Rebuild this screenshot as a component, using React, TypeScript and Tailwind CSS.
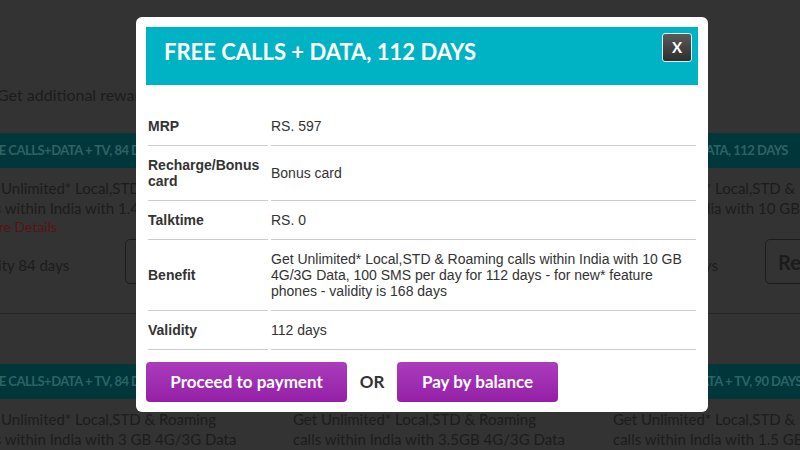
import { Fragment } from "react"

type Plan = {
    title: string,
    line1: string,
    line2: string,
    validity: string,
}

const topPlans: Plan[] = [
    { title: "FREE CALLS+DATA + TV, 84 DAYS", line1: "Get Unlimited* Local,STD & Roaming", line2: "calls within India with 1.4 GB 4G/3G Data", validity: "Validity 84 days" },
    { title: "FREE CALLS+DATA, 84 DAYS", line1: "Get Unlimited* Local,STD & Roaming", line2: "calls within India with 2 GB 4G/3G Data", validity: "Validity 84 days" },
    { title: "FREE CALLS + DATA, 112 DAYS", line1: "Get Unlimited* Local,STD & Roaming", line2: "calls within India with 10 GB 4G/3G Data", validity: "Validity 112 days" },
]

const bottomPlans: Plan[] = [
    { title: "FREE CALLS+DATA + TV, 84 DAYS", line1: "Get Unlimited* Local,STD & Roaming", line2: "calls within India with 3 GB 4G/3G Data", validity: "Validity 84 days" },
    { title: "FREE CALLS+DATA + TV, 84 DAYS", line1: "Get Unlimited* Local,STD & Roaming", line2: "calls within India with 3.5GB 4G/3G Data", validity: "Validity 84 days" },
    { title: "FREE CALLS+DATA + TV, 90 DAYS", line1: "Get Unlimited* Local,STD & Roaming", line2: "calls within India with 1.5 GB 4G/3G Data", validity: "Validity 90 days" },
]

const details = [
    { label: "MRP", value: "RS. 597" },
    { label: "Recharge/Bonus card", value: "Bonus card" },
    { label: "Talktime", value: "RS. 0" },
    { label: "Benefit", value: "Get Unlimited* Local,STD & Roaming calls within India with 10 GB 4G/3G Data, 100 SMS per day for 112 days - for new* feature phones - validity is 168 days" },
    { label: "Validity", value: "112 days" },
]

const PlanCard = ({ plan }: { plan: Plan }) => {
    return (
        <div className="w-[320px] shrink-0 pr-[20px]">
            <div className="h-[35px] bg-[#00373b] flex items-center pl-[4px] text-[13px] font-bold text-[#2e6366] whitespace-nowrap tracking-[-0.5px]">
                {plan.title}
            </div>
            <div className="mt-[10px] w-[255px] text-[15px] leading-[20px] text-[#1c1c1c] whitespace-nowrap">
                <p>{plan.line1}</p>
                <p>{plan.line2}</p>
            </div>
            <p className="text-[14px] leading-[18px] text-[#571212] pl-[5px]">More Details</p>
            <div className="mt-[3px] flex items-center">
                <span className="-ml-[7px] w-[159px] pt-[8px] text-[15px] text-[#1c1c1c]">{plan.validity}</span>
                <div className="w-[120px] h-[45px] border border-[#1c1c1c] rounded-[5px] flex items-center px-[12px] text-[20px] font-bold text-[#1c1c1c]">
                    Recharge
                </div>
            </div>
        </div>
    )
}

const App = () => {
    return (
        <div className="relative w-[800px] h-[450px] overflow-hidden bg-[#333333] font-['Lato',sans-serif]">
            {/* page behind the dimmed overlay */}
            <div className="pt-[83px]">
                <p className="-ml-[3px] text-[16px] leading-[24px] text-[#1c1c1c] whitespace-nowrap">
                    Get additional rewards when you recharge online
                </p>
                <div className="mt-[26px] -ml-[27px] flex border-b border-[#262626] pb-[29px]">
                    {topPlans.map((plan, i) => (
                        <PlanCard key={i} plan={plan} />
                    ))}
                </div>
                <div className="mt-[50px] -ml-[27px] flex">
                    {bottomPlans.map((plan, i) => (
                        <PlanCard key={i} plan={plan} />
                    ))}
                </div>
            </div>

            {/* modal */}
            <div className="absolute left-[136px] top-[17px] w-[572px] bg-white rounded-[6px] p-[10px]">
                <div className="relative h-[58px] bg-[#00b3c4] pl-[18px] pt-[9px]">
                    <h2 className="text-[22px] leading-[32px] font-bold text-white">
                        FREE CALLS + DATA, 112 DAYS
                    </h2>
                    <button className="absolute right-[6px] top-[6px] w-[30px] h-[29px] rounded-[3px] bg-gradient-to-b from-[#5a5a5a] to-[#2e2e2e] border border-[#d9f2f4] text-white text-[15px] font-bold flex items-center justify-center">
                        X
                    </button>
                </div>

                <div className="mt-[22px] ml-[2px] grid grid-cols-[120px_425px] gap-x-[3px] font-['Liberation_Sans',Arial,sans-serif] text-[14px] leading-[16px] text-[#333333]">
                    {details.map((row, i) => (
                        <Fragment key={i}>
                            <div className="py-[11px] border-b border-[#cccccc] font-bold flex items-center">
                                {row.label}
                            </div>
                            <div className="py-[11px] border-b border-[#cccccc] flex items-center">
                                {row.value}
                            </div>
                        </Fragment>
                    ))}
                </div>

                <div className="mt-[12px] flex items-center">
                    <button className="w-[201px] h-[40px] rounded-[4px] bg-gradient-to-b from-[#ab3cbc] to-[#941fa6] text-white text-[17px] font-bold">
                        Proceed to payment
                    </button>
                    <span className="w-[50px] text-center text-[17px] font-bold text-[#333333]">OR</span>
                    <button className="w-[161px] h-[40px] rounded-[4px] bg-gradient-to-b from-[#ab3cbc] to-[#941fa6] text-white text-[17px] font-bold">
                        Pay by balance
                    </button>
                </div>
            </div>
        </div>
    )
}

export default App
